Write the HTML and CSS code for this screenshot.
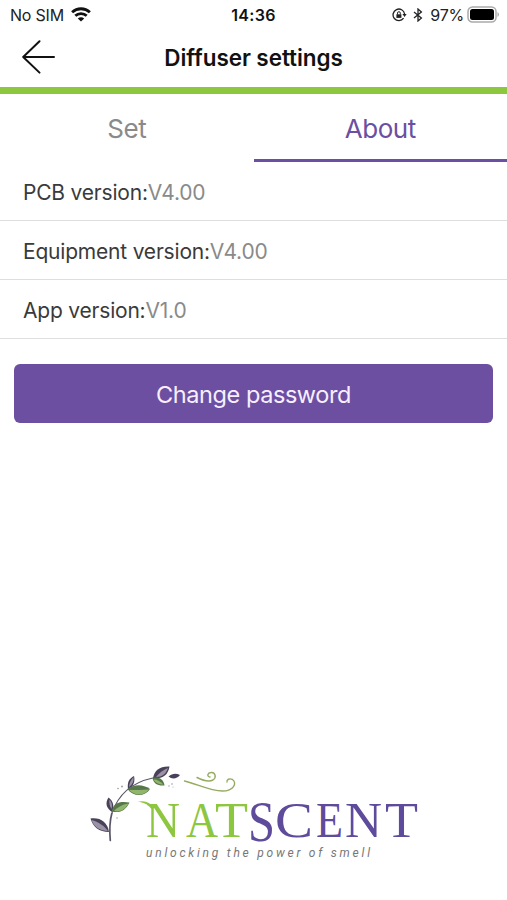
FILE: index.html
```html
<!DOCTYPE html>
<html lang="en">
<head>
<meta charset="utf-8">
<title>Diffuser settings</title>
<link rel="stylesheet" href="styles.css">
</head>
<body>
<div class="status">
  <div class="status-left">
    <span class="carrier">No SIM</span>
    <svg class="wifi" width="20" height="15" viewBox="0 0 20 15" fill="none" stroke="#111" stroke-width="2.8">
      <path d="M1.1 5.2C6.1.6 13.9.6 18.9 5.2M4.3 8.8c3.2-3 8.2-3 11.4 0"/>
      <path d="M10 14.600 6.800 11.500c1.800-1.600 4.600-1.600 6.400 0z" fill="#111" stroke="none"/>
    </svg>
  </div>
  <span class="clock">14:36</span>
  <div class="status-right">
    <svg width="15" height="14" viewBox="0 0 15 14" fill="none" stroke="#222" stroke-width="1.3">
      <path d="M11.600 10.200A5.800 5.800 0 1 1 12.600 6"/>
      <path d="M10.400 6h4.200l-2 2.900z" fill="#222" stroke="none"/>
      <path d="M4.400 6.300h5v3.600h-5z" fill="#222" stroke="none"/>
      <path d="M5.500 6.500V5.100a1.400 1.400 0 0 1 2.800 0v1.400" stroke-width="1"/>
    </svg>
    <svg class="bluetooth" width="10" height="14" viewBox="0 0 10 14" fill="none" stroke="#222" stroke-width="1.3">
      <path d="M1 4l7.400 6.100L5 13V1l3.400 2.900L1 10"/>
    </svg>
    <span class="percent">97%</span>
    <svg class="battery" width="32" height="17" viewBox="0 0 32 17">
      <rect x="1" y="1" width="28" height="15" rx="4.500" fill="#fff" stroke="#aaa" stroke-width="1.500"/>
      <rect x="3" y="3" width="24" height="11" rx="2.500"/>
      <path d="M30.500 6v5q1.500-.6 1.500-2.500T30.500 6" fill="#aaa"/>
    </svg>
  </div>
</div>
<header class="header">
  <svg class="back" width="34" height="34" viewBox="0 0 34 34" fill="none" stroke="#111" stroke-width="2" stroke-linecap="round" stroke-linejoin="round">
    <path d="M17.500 1.200 1.200 17l16.300 15.600M1.500 17H32"/>
  </svg>
  <h1 class="title">Diffuser settings</h1>
</header>
<nav class="tabs">
  <div class="tab"><span>Set</span></div>
  <div class="tab active"><span>About</span></div>
</nav>
<main>
  <div class="row">PCB version:<span>V4.00</span></div>
  <div class="row">Equipment version:<span>V4.00</span></div>
  <div class="row">App version:<span>V1.0</span></div>
  <button class="button">Change password</button>
</main>
<footer class="footer">
  <svg width="340" height="105" viewBox="85 760 340 105">
    <g fill="none" stroke="#5a5569" stroke-linecap="round">
      <path d="M110.300 840.500c-.8-9-1-18 1.500-27" stroke-width="1.700"/>
      <path d="M111.800 813.500c6-18 20-31 41-35.500" stroke-width="1.100"/>
    </g>
    <g fill="#494159">
      <path d="M90.500 818.500c9-1.500 17 3 18.500 13.500-10 0-16-5-18.500-13.500z"/>
      <path d="M112 812c-6-4-7-9-3.500-14.500 5 3.500 6 9 3.500 14.500z"/>
      <path d="M128 789.500c-1-7 1-11 6-13.500 1.500 6-1 11-6 13.500z"/>
      <path d="M153 778c1.500-8 7-12 16.500-11.500-1.500 9-7.500 13-16.500 11.500z"/>
      <path d="M168.500 776.500c4-3.500 7.500-3.500 11.500-1.500-3 4-8 4.500-11.500 1.500z"/>
    </g>
    <g fill="#9993a5">
      <path d="M91.500 820c7 2 13 6 16.500 11-8 0-14-4-16.500-11z"/>
      <path d="M156 777c3-4 7-7 12-9-2 6-6 9-12 9z"/>
      <path d="M129 787c0-4 2-7 4.500-10 .5 4-1 7.500-4.500 10z"/>
      <path d="M111.500 809c-2-3-2.500-6-2-9.500 2.500 3 3 6 2 9.500z"/>
    </g>
    <g fill="#56774a">
      <path d="M112 811.500c1-9 8-10.500 17.500-9-4 8-9.500 11-17.500 9z"/>
      <path d="M127.500 789c7-5 15-5 22.500 0-5 8-17 8-22.500 0z"/>
      <path d="M152.500 778c6-1.500 11 1 12 7.500-7 .5-11-2-12-7.500z"/>
    </g>
    <g fill="#91b56d">
      <path d="M114 811c4-4 8-6.500 14.500-7.500-3.500 6-8 9-14.500 7.500z"/>
      <path d="M129 790c7 0 13 0 20-.5-5 6.500-14 6.500-20 .5z"/>
      <path d="M153.500 779.500c4 0 7 2 10 5-5 0-8-1.500-10-5z"/>
    </g>
    <g fill="#999">
      <circle cx="118" cy="788.500" r=".8"/><circle cx="122" cy="786.500" r=".9"/>
      <circle cx="117" cy="818" r=".7"/><circle cx="169" cy="786" r=".7"/>
      <circle cx="172" cy="784" r=".8"/><circle cx="173" cy="787" r=".5"/>
    </g>
    <g fill="none" stroke="#95ab62" stroke-width="1.400" stroke-linecap="round">
      <path d="M184.500 781c13 3 25 10 38 10 11 0 15-8 10-11.500-3-1.500-6 0-5.500 2.500"/>
      <path d="M197 777.500c6 3 12 4.500 16 2.500 4-3 2-8-2-7.500-3.500.3-4.500 4-1 4.500"/>
    </g>
    <path d="M137.500 802c7-2 12 0 17 6l-3 1c-4-5-8-7-14-7z" fill="#8dc63f"/>
    <g class="brand green">
      <text x="146" y="837" textLength="34" lengthAdjust="spacingAndGlyphs">N</text>
      <text x="186" y="837" textLength="32" lengthAdjust="spacingAndGlyphs">A</text>
      <text x="215" y="837" textLength="33" lengthAdjust="spacingAndGlyphs">T</text>
    </g>
    <g class="brand purple">
      <text class="tall" x="248" y="841" textLength="27" lengthAdjust="spacingAndGlyphs">S</text>
      <text x="275" y="837" textLength="38" lengthAdjust="spacingAndGlyphs">C</text>
      <text x="316" y="837" textLength="27" lengthAdjust="spacingAndGlyphs">E</text>
      <text x="345" y="837" textLength="37" lengthAdjust="spacingAndGlyphs">N</text>
      <text x="385" y="837" textLength="33" lengthAdjust="spacingAndGlyphs">T</text>
    </g>
    <text class="tagline" x="146" y="857" textLength="224">unlocking the power of smell</text>
  </svg>
</footer>
</body>
</html>
```
FILE: styles.css
```css
* { box-sizing: border-box; }
body {
  margin: 0;
  height: 900px;
  display: flex;
  flex-direction: column;
  background: #fff;
  color: #3a3a3a;
  font-family: Inter, "Liberation Sans", sans-serif;
  overflow: hidden;
}
.status {
  height: 29px;
  display: grid;
  grid-template-columns: 1fr auto 1fr;
  align-items: center;
  padding: 0 8px 0 10px;
  font-size: 16px;
  color: #222;
}
.status-left, .status-right { display: flex; align-items: center; }
.status-right { justify-content: flex-end; }
.carrier { letter-spacing: -.2px; }
.wifi { margin-left: 7px; }
.clock { margin-right: 2px; font-weight: 600; letter-spacing: .3px; color: #111; }
.bluetooth { margin-left: 6px; }
.percent { margin: 0 3px 0 7px; letter-spacing: -.2px; }
.header {
  height: 65px;
  display: grid;
  grid-template-columns: 60px 1fr 60px;
  align-items: center;
  padding-bottom: 2px;
  border-bottom: 7px solid #8dc63f;
}
.back { margin-left: 22px; }
.title {
  margin: 0;
  text-align: center;
  font-size: 22.5px;
  font-weight: 600;
  letter-spacing: -.07px;
  color: #111;
}
.tabs { height: 68px; display: flex; }
.tab {
  flex: 1;
  display: flex;
  justify-content: center;
  padding-top: 18px;
  border-bottom: 3px solid transparent;
  font-size: 26px;
  line-height: 34px;
  letter-spacing: -.5px;
  color: #8a8a8a;
}
.active { color: #6a4fa3; border-color: #6a4fa3; }
.row {
  height: 59px;
  display: flex;
  align-items: center;
  padding: 2px 23px 0;
  border-bottom: 1px solid #dedede;
  font-size: 21px;
  letter-spacing: -.2px;
}
.row span { color: #8a8a8a; }
.button {
  display: block;
  width: 479px;
  height: 59px;
  margin: 25px 14px 0;
  padding: 2px 0 0;
  border: 0;
  border-radius: 6px;
  background: #6d4fa2;
  color: #f7efff;
  font: 23.5px Inter, "Liberation Sans", sans-serif;
  letter-spacing: -.43px;
}
.footer { margin: auto 0 35px 85px; }
.footer svg { display: block; }
.brand { font: 50px "Liberation Serif", serif; }
.green { fill: #8dc63f; }
.purple { fill: #5f4b9b; }
.tall { font-size: 56px; }
.tagline { font: italic 12px Roboto, sans-serif; fill: #777; }
```
